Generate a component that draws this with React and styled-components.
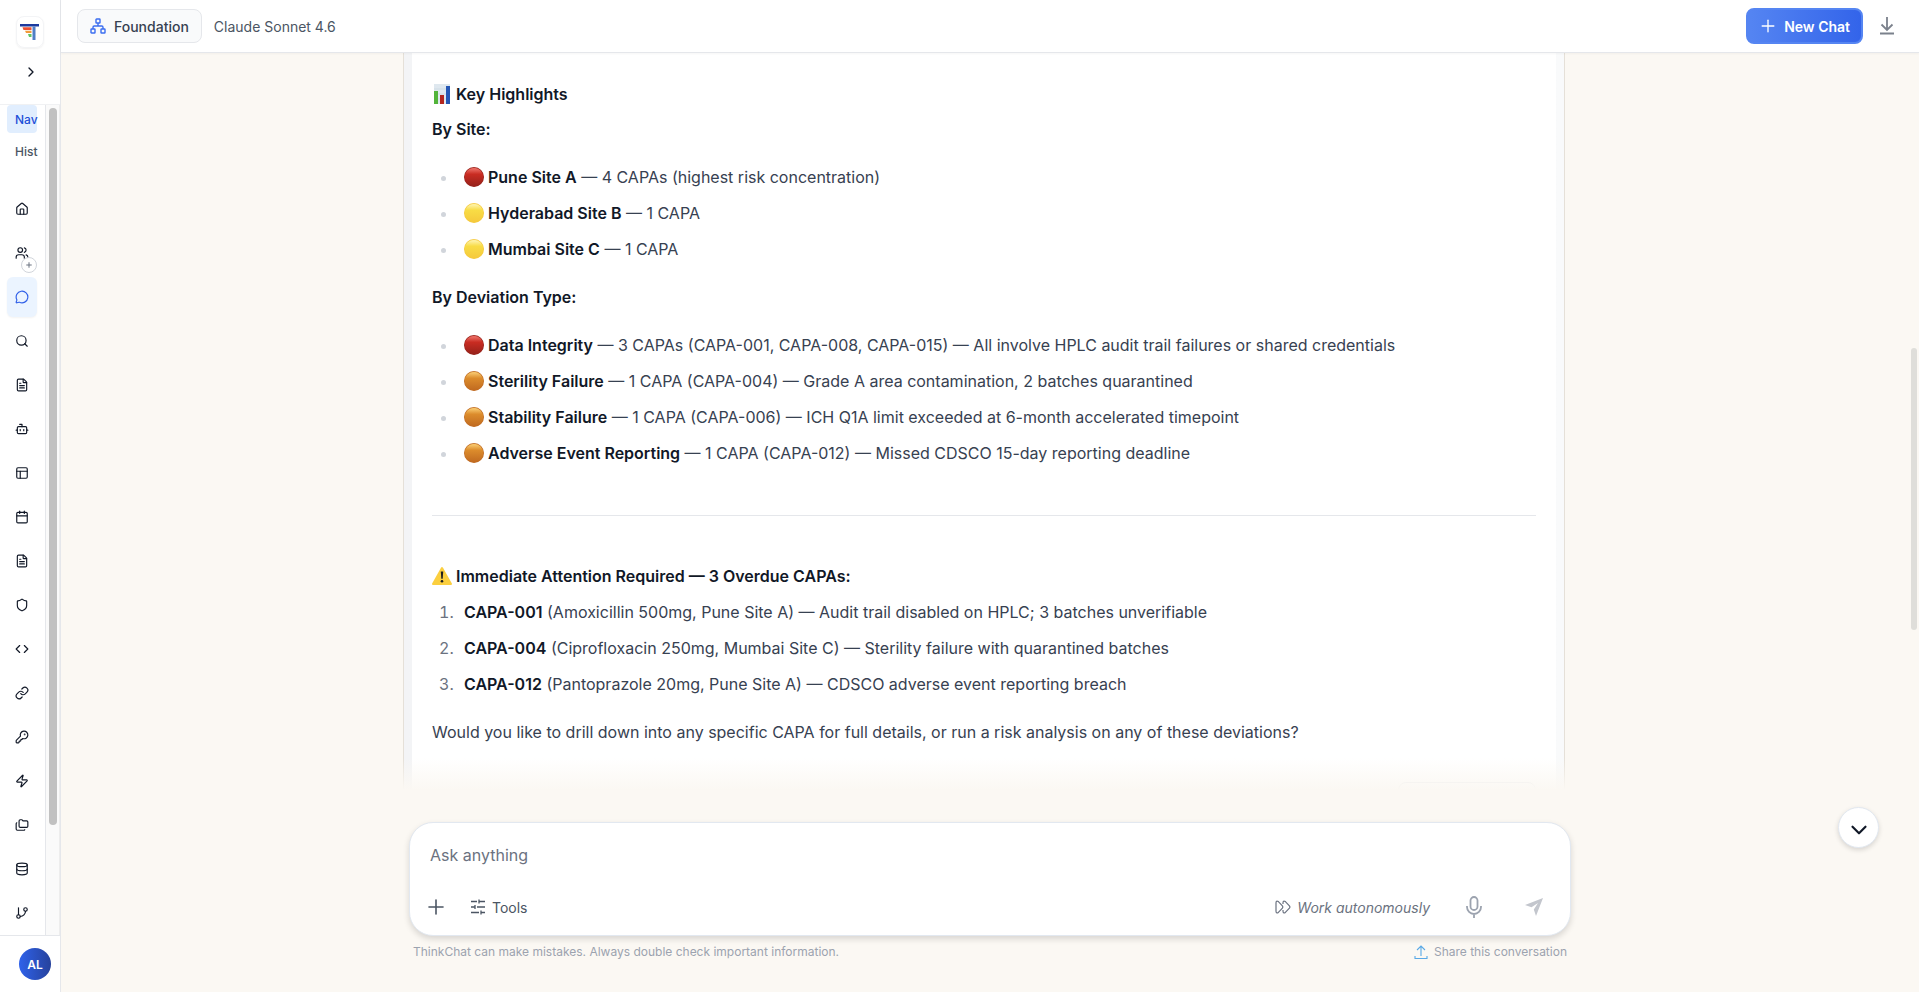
import React, { useState } from 'react';
import styled, { createGlobalStyle } from 'styled-components';
import {
  Bot,
  Calendar,
  ChevronDown,
  ChevronRight,
  Code,
  Database,
  FileText,
  Folders,
  GitBranch,
  House,
  KeyRound,
  Link,
  MessageCircle,
  PanelsTopLeft,
  Plus,
  Search,
  Shield,
  Users,
  Zap,
} from 'lucide-react';

const navItems = [
  { label: 'Home', icon: House },
  { label: 'Teams', icon: Users, badge: true },
  { label: 'Chat', icon: MessageCircle },
  { label: 'Search', icon: Search },
  { label: 'Documents', icon: FileText },
  { label: 'Agents', icon: Bot },
  { label: 'Workspace', icon: PanelsTopLeft },
  { label: 'Calendar', icon: Calendar },
  { label: 'Reports', icon: FileText },
  { label: 'Security', icon: Shield },
  { label: 'Developer', icon: Code },
  { label: 'Links', icon: Link },
  { label: 'Keys', icon: KeyRound },
  { label: 'Automations', icon: Zap },
  { label: 'Files', icon: Folders },
  { label: 'Data', icon: Database },
  { label: 'Branches', icon: GitBranch },
];

const sites = [
  { level: 'red', name: 'Pune Site A', text: '4 CAPAs (highest risk concentration)' },
  { level: 'yellow', name: 'Hyderabad Site B', text: '1 CAPA' },
  { level: 'yellow', name: 'Mumbai Site C', text: '1 CAPA' },
];

const deviations = [
  {
    level: 'red',
    name: 'Data Integrity',
    text: '3 CAPAs (CAPA-001, CAPA-008, CAPA-015) — All involve HPLC audit trail failures or shared credentials',
  },
  {
    level: 'orange',
    name: 'Sterility Failure',
    text: '1 CAPA (CAPA-004) — Grade A area contamination, 2 batches quarantined',
  },
  {
    level: 'orange',
    name: 'Stability Failure',
    text: '1 CAPA (CAPA-006) — ICH Q1A limit exceeded at 6-month accelerated timepoint',
  },
  {
    level: 'orange',
    name: 'Adverse Event Reporting',
    text: '1 CAPA (CAPA-012) — Missed CDSCO 15-day reporting deadline',
  },
];

const overdue = [
  { id: 'CAPA-001', text: '(Amoxicillin 500mg, Pune Site A) — Audit trail disabled on HPLC; 3 batches unverifiable' },
  { id: 'CAPA-004', text: '(Ciprofloxacin 250mg, Mumbai Site C) — Sterility failure with quarantined batches' },
  { id: 'CAPA-012', text: '(Pantoprazole 20mg, Pune Site A) — CDSCO adverse event reporting breach' },
];

const levelColors = {
  red: ['#e8685f', '#c92c22', '#96211a'],
  yellow: ['#fdf0a0', '#f8dc45', '#f5c93c'],
  orange: ['#f5c368', '#dc8c2c', '#c06a20'],
};

const Logo = () => (
  <svg width="20" height="20" viewBox="0 0 20 20" aria-hidden="true">
    <path d="M0 2h19v2.5H0z" fill="#1c3a9e" />
    <path d="M2.5 5.3h9v2.6h-8z" fill="#ec5034" />
    <path d="M5 8.8h6.500v2.300H6z" fill="#f39a3b" />
    <path d="M8 12h3.500v3H9z" fill="#5fc463" />
    <path d="M12.500 4.500h3V18h-3z" fill="#4f7fc6" />
  </svg>
);

const Level = ({ level }) => {
  const [top, middle, bottom] = levelColors[level];
  return (
    <Emoji width="20" height="20" viewBox="0 0 20 20" role="img" aria-label={level}>
      <defs>
        <linearGradient id={`level-${level}`} x1="0" y1="0" x2="0" y2="1">
          <stop offset="0.08" stopColor={top} />
          <stop offset="0.35" stopColor={middle} />
          <stop offset="1" stopColor={bottom} />
        </linearGradient>
      </defs>
      <circle cx="10" cy="10" r="10" fill={bottom} />
      <circle cx="10" cy="10" r="9.3" fill={`url(#level-${level})`} />
    </Emoji>
  );
};

const ChartEmoji = () => (
  <Emoji width="20" height="20" viewBox="0 0 20 20" role="img" aria-label="Chart">
    <path d="M2 0h16v20H2z" fill="#dfe8ef" />
    <path d="M2 5h16M2 10h16M2 15h16" stroke="#c6d3de" strokeWidth="0.6" />
    <path d="M2 7h4v13H2z" fill="#52b43a" />
    <path d="M8 11h4v9H8z" fill="#b3261e" />
    <path d="M14 2h4v18h-4z" fill="#2557b5" />
  </Emoji>
);

const WarningEmoji = () => (
  <Emoji width="20" height="20" viewBox="0 0 20 20" role="img" aria-label="Warning">
    <path d="M10 2 19 18H1z" fill="#fbcf3f" stroke="#fbcf3f" strokeWidth="2" strokeLinejoin="round" />
    <path d="M8.8 5.5h2.4l-.5 7.2H9.3z" fill="#1d1d1d" />
    <circle cx="10" cy="15.3" r="1.3" fill="#1d1d1d" />
  </Emoji>
);

const SitemapIcon = () => (
  <svg width="16" height="16" viewBox="0 0 16 16" fill="none" stroke="#3b6df0" strokeWidth="1.4" aria-hidden="true">
    <rect x="6" y="1" width="4" height="4" rx="0.6" />
    <rect x="1" y="11" width="4" height="4" rx="0.6" />
    <rect x="11" y="11" width="4" height="4" rx="0.6" />
    <path d="M8 5v3M3 11V9.2Q3 8 4.2 8h7.6Q13 8 13 9.2V11" />
  </svg>
);

const DownloadIcon = () => (
  <svg width="18" height="18" viewBox="0 0 18 18" fill="none" stroke="#7b818c" strokeWidth="1.8" aria-hidden="true">
    <path d="M9 0v13M3.500 7.500 9 13 14.500 7.500M2 16.500h14" />
  </svg>
);

const ToolsIcon = () => (
  <svg width="16" height="16" viewBox="0 0 16 16" fill="none" stroke="#4b5563" strokeWidth="1.3" aria-hidden="true">
    <path d="M1 2.5h6M9 2.5h6M9 .5v4M1 8h4M7 8h8M5 6v4M1 13.5h8M11 13.5h4M11 11.5v4" />
  </svg>
);

const ForwardIcon = () => (
  <svg width="16" height="16" viewBox="0 0 16 16" fill="none" stroke="#6b7280" strokeWidth="1.2" aria-hidden="true">
    <path d="M1 4v8q0 3 2.400 1.400L7.400 9.200q1-1.200 0-2.400L3.400 2.600Q1 1 1 4z" />
    <path d="M8 5V4q0-3 2.400-1.400l4 4.200q1 1.200 0 2.400l-4 4.200Q8 15 8 12v-1" />
  </svg>
);

const MicIcon = () => (
  <svg width="24" height="24" viewBox="0 0 24 24" fill="none" stroke="#9ca3af" strokeWidth="1.8" aria-hidden="true">
    <rect x="8.500" y="2" width="7" height="13" rx="3.500" />
    <path d="M5 11v1a7 7 0 0 0 14 0v-1M12 19v4" />
  </svg>
);

const SendIcon = () => (
  <svg width="20" height="20" viewBox="0 0 20 20" fill="#c3c6cd" aria-hidden="true">
    <path d="M19 1 12 19 9.800 12.500 14 6 7.500 10.200 1 8z" />
  </svg>
);

const ShareIcon = () => (
  <svg width="14" height="14" viewBox="0 0 14 14" fill="none" stroke="#5aa9e6" strokeWidth="1.1" aria-hidden="true">
    <path d="M7 11V1M3 5l4-4 4 4M1 11v2.500h12V11" />
  </svg>
);

const LevelList = ({ items }) => (
  <BulletList>
    {items.map((item) => (
      <li key={item.name}>
        <Level level={item.level} />
        <strong>{item.name}</strong> — {item.text}
      </li>
    ))}
  </BulletList>
);

const Sidebar = () => {
  const [active, setActive] = useState('Chat');

  return (
    <SidebarAside>
      <SidebarTop>
        <LogoBox>
          <Logo />
        </LogoBox>
        <ExpandButton aria-label="Expand sidebar">
          <ChevronRight size={16} />
        </ExpandButton>
      </SidebarTop>
      <SidebarBody>
        <SidebarScroll>
          <TabButton $active>Nav</TabButton>
          <TabButton>Hist</TabButton>
          <NavList>
            {navItems.map(({ label, icon: Icon, badge }) => (
              <NavButton
                key={label}
                aria-label={label}
                $active={label === active}
                onClick={() => setActive(label)}
              >
                <Icon size={14} />
                {badge && (
                  <Badge>
                    <Plus size={8} strokeWidth={3} />
                  </Badge>
                )}
              </NavButton>
            ))}
          </NavList>
        </SidebarScroll>
        <SidebarTrack>
          <SidebarThumb />
        </SidebarTrack>
      </SidebarBody>
      <SidebarFooter>
        <Avatar aria-label="Account">AL</Avatar>
      </SidebarFooter>
    </SidebarAside>
  );
};

const Composer = () => {
  const [message, setMessage] = useState('');

  return (
    <ComposerArea>
      <ComposerForm onSubmit={(e) => e.preventDefault()}>
        <MessageInput
          rows={1}
          aria-label="Message"
          placeholder="Ask anything"
          value={message}
          onChange={(e) => setMessage(e.target.value)}
        />
        <ComposerBar>
          <BarGroup $gap={22}>
            <TextButton type="button" aria-label="Add attachment">
              <Plus size={24} strokeWidth={1.6} />
            </TextButton>
            <TextButton type="button">
              <ToolsIcon />
              Tools
            </TextButton>
          </BarGroup>
          <BarGroup $gap={28}>
            <AutoButton type="button">
              <ForwardIcon />
              Work autonomously
            </AutoButton>
            <IconButton type="button" aria-label="Dictate">
              <MicIcon />
            </IconButton>
            <IconButton aria-label="Send">
              <SendIcon />
            </IconButton>
          </BarGroup>
        </ComposerBar>
      </ComposerForm>
      <Notes>
        <span>ThinkChat can make mistakes. Always double check important information.</span>
        <ShareButton>
          <ShareIcon />
          Share this conversation
        </ShareButton>
      </Notes>
      <ScrollDownButton aria-label="Scroll to bottom">
        <ChevronDown size={26} />
      </ScrollDownButton>
    </ComposerArea>
  );
};

const App = () => {
  return (
    <>
      <GlobalStyle />
      <Layout>
        <Sidebar />
        <Main>
          <Header>
            <FoundationButton>
              <SitemapIcon />
              Foundation
            </FoundationButton>
            <ModelName>Claude Sonnet 4.6</ModelName>
            <Spacer />
            <NewChatButton>
              <Plus size={20} strokeWidth={1.6} />
              New Chat
            </NewChatButton>
            <DownloadButton aria-label="Download">
              <DownloadIcon />
            </DownloadButton>
          </Header>
          <ChatArea>
            <ChatScroll>
              <Bubble>
                <Message>
                  <h3>
                    <ChartEmoji />
                    Key Highlights
                  </h3>
                  <p>
                    <strong>By Site:</strong>
                  </p>
                  <LevelList items={sites} />
                  <p>
                    <strong>By Deviation Type:</strong>
                  </p>
                  <LevelList items={deviations} />
                  <hr />
                  <p>
                    <strong>
                      <WarningEmoji />
                      Immediate Attention Required — 3 Overdue CAPAs:
                    </strong>
                  </p>
                  <NumberList>
                    {overdue.map((item) => (
                      <li key={item.id}>
                        <strong>{item.id}</strong> {item.text}
                      </li>
                    ))}
                  </NumberList>
                  <p>
                    Would you like to drill down into any specific CAPA for full details, or run a risk analysis on any
                    of these deviations?
                  </p>
                  <MessageActions />
                </Message>
              </Bubble>
            </ChatScroll>
            <ChatTrack>
              <ChatThumb />
            </ChatTrack>
            <Fade />
          </ChatArea>
          <Composer />
        </Main>
      </Layout>
    </>
  );
};

export default App;

const GlobalStyle = createGlobalStyle`
  * {
    box-sizing: border-box;
  }
  body {
    margin: 0;
    font-family: Inter, 'Liberation Sans', sans-serif;
    color: #111827;
    background: #fbf8f3;
  }
  button {
    padding: 0;
    border: none;
    background: none;
    font: inherit;
    color: inherit;
    cursor: pointer;
  }
`;

const Layout = styled.div`
  height: 100vh;
  display: flex;
  overflow: hidden;
`;

const SidebarAside = styled.aside`
  width: 61px;
  flex: none;
  display: flex;
  flex-direction: column;
  background: #fff;
  border-right: 1px solid #e5e7eb;
`;

const SidebarTop = styled.div`
  height: 105px;
  flex: none;
  padding-top: 16px;
  display: flex;
  flex-direction: column;
  align-items: center;
  gap: 12px;
  border-bottom: 1px solid #f0f1f3;
`;

const LogoBox = styled.div`
  width: 28px;
  height: 32px;
  display: flex;
  align-items: center;
  justify-content: center;
  border: 1px solid #f3f4f6;
  border-radius: 8px;
  box-shadow: 0 1px 2px rgba(0, 0, 0, 0.06);
`;

const ExpandButton = styled.button`
  width: 24px;
  height: 24px;
  padding-left: 2px;
  display: flex;
  align-items: center;
  justify-content: center;
`;

const SidebarBody = styled.div`
  flex: 1;
  min-height: 0;
  display: flex;
`;

const SidebarScroll = styled.div`
  width: 45px;
  padding: 0 8px 0 7px;
  overflow: hidden;
`;

const TabButton = styled.button`
  width: 30px;
  height: 28px;
  margin-bottom: 4px;
  padding-left: 8px;
  display: flex;
  align-items: center;
  font-size: 12px;
  font-weight: 500;
  border-radius: 4px;
  color: ${(props) => (props.$active ? '#1d4ed8' : '#4b5563')};
  background: ${(props) => (props.$active ? '#e1eefe' : 'none')};
`;

const NavList = styled.nav`
  padding-top: 20px;
  display: flex;
  flex-direction: column;
  gap: 4px;
`;

const NavButton = styled.button`
  position: relative;
  width: 30px;
  height: 40px;
  flex: none;
  display: flex;
  align-items: center;
  justify-content: center;
  border-radius: 6px;
  color: ${(props) => (props.$active ? '#2f5fe8' : '#111827')};
  background: ${(props) => (props.$active ? '#ebf4ff' : 'none')};
  box-shadow: ${(props) => (props.$active ? '0 1px 2px rgba(0, 0, 0, 0.05)' : 'none')};
`;

const Badge = styled.span`
  position: absolute;
  right: 0;
  bottom: 0;
  width: 16px;
  height: 16px;
  display: flex;
  align-items: center;
  justify-content: center;
  color: #6b7280;
  background: #fff;
  border: 1px solid #d1d5db;
  border-radius: 50%;
`;

const SidebarTrack = styled.div`
  width: 15px;
  padding: 3px;
  background: #fafafa;
  border-left: 1px solid #e5e7eb;
  border-right: 1px solid #ededed;
`;

const SidebarThumb = styled.div`
  width: 8px;
  height: 87%;
  background: #c1c1c1;
  border-radius: 4px;
`;

const SidebarFooter = styled.div`
  height: 57px;
  flex: none;
  display: flex;
  align-items: center;
  justify-content: center;
  padding-left: 10px;
  border-top: 1px solid #e5e7eb;
`;

const Avatar = styled.button`
  width: 32px;
  height: 32px;
  font-size: 12px;
  font-weight: 600;
  color: #fff;
  background: linear-gradient(90deg, #2f62ea, #26429c);
  border-radius: 50%;
`;

const Main = styled.main`
  flex: 1;
  min-width: 0;
  display: flex;
  flex-direction: column;
`;

const Header = styled.header`
  height: 53px;
  flex: none;
  padding: 0 20px 0 16px;
  display: flex;
  align-items: center;
  gap: 12px;
  font-size: 14px;
  background: #fff;
  border-bottom: 1px solid #e5e7eb;
  box-shadow: 0 1px 2px rgba(0, 0, 0, 0.04);
  z-index: 1;
`;

const FoundationButton = styled.button`
  height: 34px;
  padding: 0 12px;
  display: flex;
  align-items: center;
  gap: 8px;
  font-weight: 500;
  color: #374151;
  background: #f9fafb;
  border: 1px solid #e5e7eb;
  border-radius: 8px;
`;

const ModelName = styled.span`
  color: #4b5563;
`;

const Spacer = styled.div`
  flex: 1;
`;

const NewChatButton = styled.button`
  height: 36px;
  padding: 0 11px 0 10px;
  display: flex;
  align-items: center;
  gap: 6px;
  font-weight: 600;
  color: #fff;
  background: linear-gradient(90deg, #5585f2, #3364ea);
  border: 2px solid #5585f2;
  border-radius: 8px;
`;

const DownloadButton = styled.button`
  width: 24px;
  height: 24px;
  display: flex;
  align-items: center;
  justify-content: center;
`;

const ChatArea = styled.section`
  position: relative;
  flex: 1;
  min-height: 0;
  display: flex;
`;

const ChatScroll = styled.div`
  flex: 1;
  overflow: hidden;
`;

const Bubble = styled.div`
  max-width: 1162px;
  margin: 0 auto;
  padding: 0 8px;
  background: linear-gradient(90deg, #f3f4f6, #f9fafb);
  border: solid #e5e0d8;
  border-width: 0 1px;
`;

const Message = styled.article`
  padding: 28px 20px 0;
  font-size: 16px;
  line-height: 28px;
  color: #374151;
  background: #fff;
  & h3 {
    margin: 0 0 8px;
    font-size: 16px;
    font-weight: 600;
    line-height: 26px;
    color: #111827;
  }
  & p {
    margin: 0;
  }
  & strong {
    font-weight: 600;
    color: #111827;
  }
  & hr {
    margin: 48px 0 46px;
    border: none;
    border-top: 1px solid #e5e7eb;
  }
`;

const BulletList = styled.ul`
  margin: 20px 0;
  padding-left: 26px;
  & li {
    margin-bottom: 8px;
    padding-left: 6px;
  }
  & li:last-child {
    margin-bottom: 0;
  }
  & li::marker {
    color: #d1d5db;
  }
`;

const NumberList = styled.ol`
  margin: 8px 0 20px;
  padding-left: 26px;
  & li {
    margin-bottom: 8px;
    padding-left: 6px;
  }
  & li:last-child {
    margin-bottom: 0;
  }
  & li::marker {
    color: #6b7280;
  }
`;

const Emoji = styled.svg`
  display: inline-block;
  margin-right: 4px;
  vertical-align: -4px;
`;

const MessageActions = styled.div`
  width: 138px;
  height: 40px;
  margin: 36px 0 0 auto;
  border: 1px solid #e5e7eb;
  border-radius: 8px;
`;

const ChatTrack = styled.div`
  width: 12px;
  padding: 0 2px 0 4px;
`;

const ChatThumb = styled.div`
  width: 6px;
  height: 282px;
  margin-top: 295px;
  background: #dfdeda;
  border-radius: 3px;
`;

const Fade = styled.div`
  position: absolute;
  left: 0;
  right: 0;
  bottom: 0;
  height: 32px;
  background: linear-gradient(rgba(251, 248, 243, 0), #fbf8f3);
  pointer-events: none;
`;

const ComposerArea = styled.footer`
  position: relative;
  padding: 32px 20px 31px;
`;

const ComposerForm = styled.form`
  max-width: 1162px;
  margin: 0 auto;
  padding: 20px 20px 12px;
  background: #fff;
  border: 1px solid #e2e8f0;
  border-radius: 24px;
  box-shadow: 0 3px 6px rgba(0, 0, 0, 0.14);
`;

const MessageInput = styled.textarea`
  display: block;
  width: 100%;
  height: 24px;
  padding: 0;
  border: none;
  outline: none;
  resize: none;
  font: inherit;
  font-size: 16px;
  line-height: 24px;
  color: #111827;
  background: none;
  &::placeholder {
    color: #6b7280;
  }
`;

const ComposerBar = styled.div`
  height: 32px;
  margin: 24px 0 0 -6px;
  display: flex;
  align-items: center;
  justify-content: space-between;
`;

const BarGroup = styled.div`
  display: flex;
  align-items: center;
  gap: ${(props) => props.$gap}px;
`;

const TextButton = styled.button`
  display: flex;
  align-items: center;
  gap: 6px;
  font-size: 14px;
  color: #4b5563;
`;

const AutoButton = styled(TextButton)`
  font-style: italic;
  color: #6b7280;
`;

const IconButton = styled.button`
  width: 32px;
  height: 32px;
  display: flex;
  align-items: center;
  justify-content: center;
`;

const Notes = styled.div`
  max-width: 1162px;
  margin: 0 auto;
  padding: 7px 4px 0;
  display: flex;
  align-items: center;
  justify-content: space-between;
  font-size: 12px;
  line-height: 18px;
  color: #9ca3af;
`;

const ShareButton = styled.button`
  display: flex;
  align-items: center;
  gap: 6px;
`;

const ScrollDownButton = styled.button`
  position: absolute;
  top: 17px;
  right: 40px;
  width: 41px;
  height: 41px;
  padding-top: 4px;
  display: flex;
  align-items: center;
  justify-content: center;
  background: #fff;
  border: 1px solid #e2e8f0;
  border-radius: 50%;
  box-shadow: 0 2px 5px rgba(0, 0, 0, 0.14);
`;
